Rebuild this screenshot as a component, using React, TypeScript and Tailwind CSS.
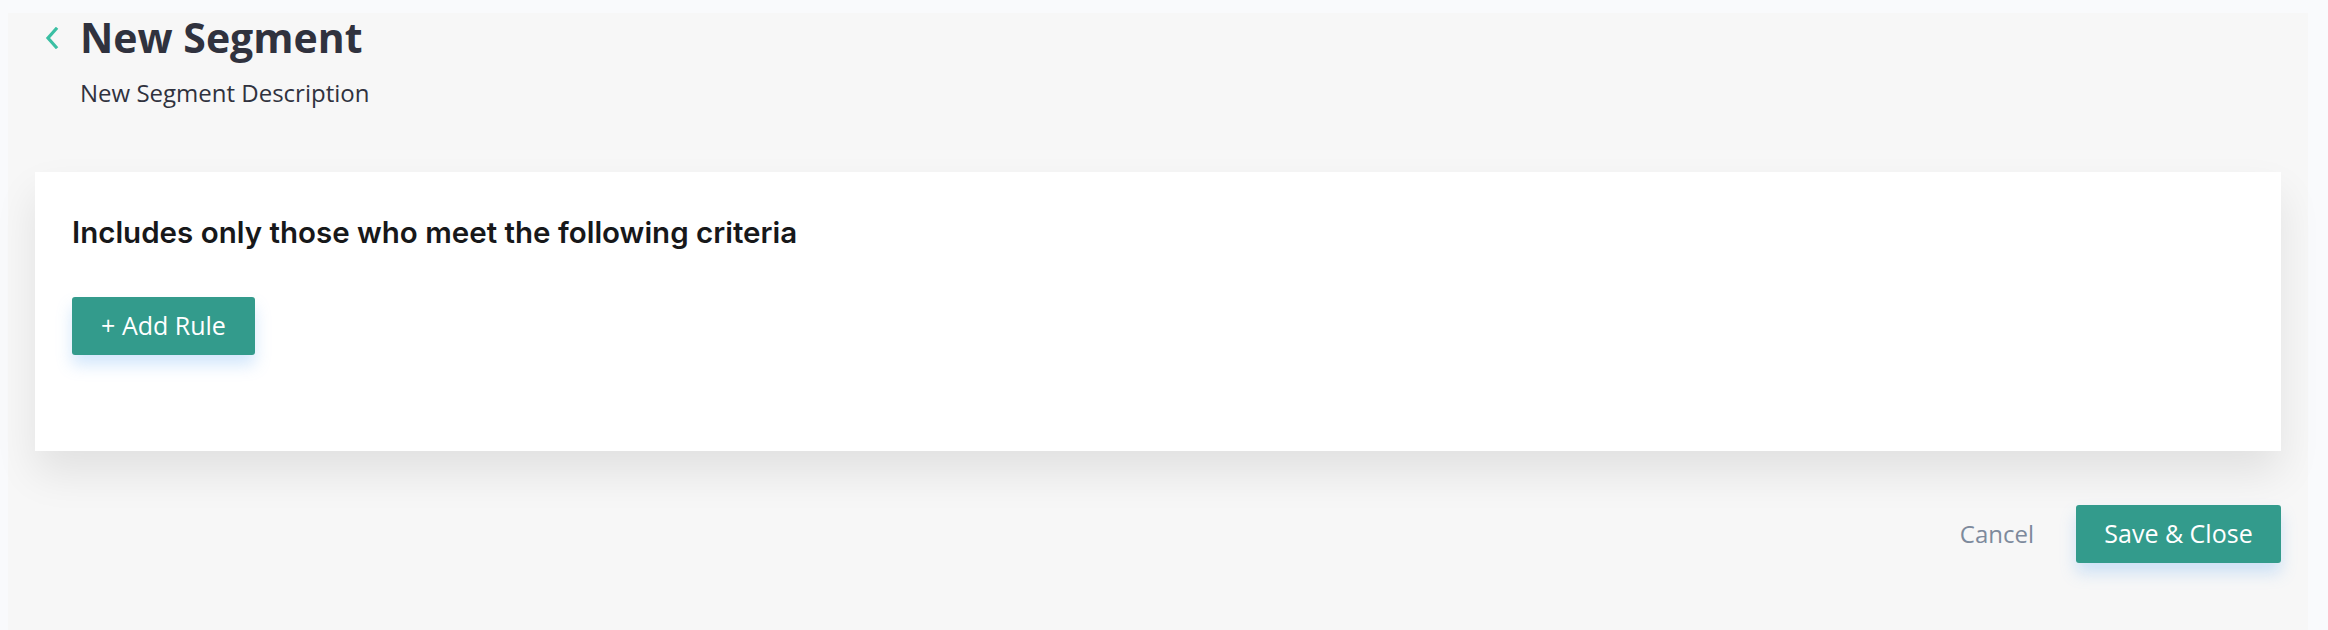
import React from "react";

function BackChevron() {
  return (
    <svg width="14" height="22" viewBox="0 0 14 22" className="mt-[14px] shrink-0">
      <title>Back</title>
      <path
        d="M11 2 L3 11 L11 20"
        fill="none"
        stroke="#3bbfa3"
        strokeWidth="3.2"
        strokeLinecap="square"
      />
    </svg>
  );
}

export default function App() {
  return (
    <div
      className="min-h-[630px] w-full bg-[#f9fafc] pl-2 pt-[13px] pr-5"
      style={{ fontFamily: "'Open Sans', 'Noto Sans', sans-serif" }}
    >
      <div className="h-[617px] w-[2300px] bg-[#f7f7f7]">
        <div className="flex gap-[21px] pl-[37px]">
          <BackChevron />
          <div className="flex flex-col">
            <h1 className="text-[41px] font-bold leading-[48px] text-[#30323e]">New Segment</h1>
            <p className="mt-[17px] text-[24px] leading-[30px] text-[#30323e]">New Segment Description</p>
          </div>
        </div>

        <div className="mx-[27px] mt-[64px] h-[279px] bg-white px-[37px] pt-[40px] shadow-[0_22px_40px_rgba(0,0,0,0.09)]">
          <h2
            className="text-[29.5px] font-semibold leading-[40px] text-[#17181a]"
            style={{ fontFamily: "'Inter', 'Noto Sans', sans-serif" }}
          >
            Includes only those who meet the following criteria
          </h2>
          <button className="mt-[45px] h-[58px] w-[183px] rounded-[3px] bg-[#339b8c] text-[25px] text-white shadow-[0_10px_16px_rgba(98,170,245,0.28)]">
            + Add Rule
          </button>
        </div>

        <div className="mr-[27px] mt-[54px] flex items-center justify-end gap-[42px]">
          <span className="text-[24px] text-[#7d8a9c]">Cancel</span>
          <button className="h-[58px] w-[205px] rounded-[3px] bg-[#339b8c] text-[25px] text-white shadow-[0_10px_16px_rgba(98,170,245,0.28)]">
            Save &amp; Close
          </button>
        </div>
      </div>
    </div>
  );
}
